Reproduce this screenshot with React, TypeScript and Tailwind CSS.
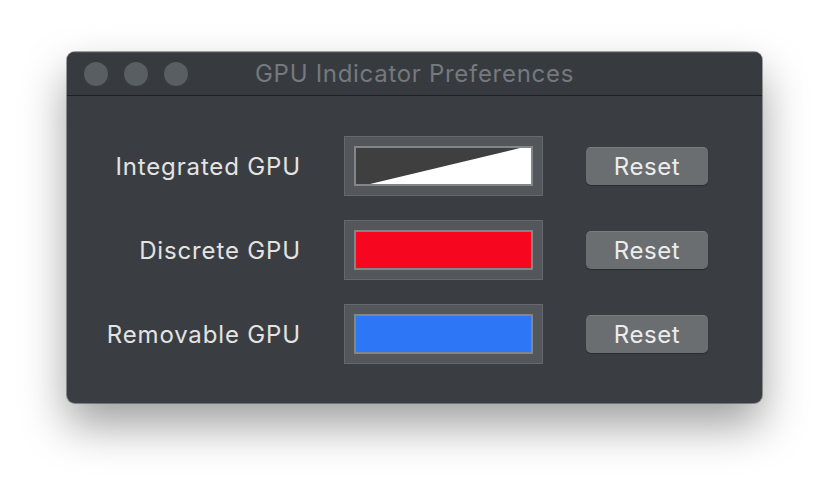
import React from "react";

type Row = { label: string; kind: "split" | "solid"; color?: string };

const rows: Row[] = [
  { label: "Integrated GPU", kind: "split" },
  { label: "Discrete GPU", kind: "solid", color: "#f7061f" },
  { label: "Removable GPU", kind: "solid", color: "#2d77f6" },
];

function Swatch({ row }: { row: Row }) {
  return (
    <div className="w-[199px] h-[60px] border border-[#65696d] bg-[#53575b] p-[9px]">
      <div className="w-full h-full border-2 border-[#848586] bg-[#3f3f3f]">
        {row.kind === "split" ? (
          <svg
            width="100%"
            height="100%"
            viewBox="0 0 175 36"
            preserveAspectRatio="none"
            className="block"
          >
            <rect width="175" height="36" fill="#3f3f3f" />
            <polygon points="14,36 164,0 175,0 175,36" fill="#ffffff" />
          </svg>
        ) : (
          <div className="w-full h-full" style={{ background: row.color }} />
        )}
      </div>
    </div>
  );
}

export default function App() {
  return (
    <div
      className="w-[830px] h-[488px] bg-white pl-[67px] pt-[52px]"
      style={{ fontFamily: "Inter, 'Noto Sans', sans-serif" }}
    >
      <div className="w-[695px] h-[351px] rounded-[8px] bg-[#3a3e42] overflow-hidden flex flex-col shadow-[0_0_0_1px_rgba(0,0,0,0.35),0_22px_45px_rgba(0,0,0,0.38)]">
        {/* title bar */}
        <div className="relative h-[44px] shrink-0 bg-[#373b3f] border-b border-[#1e2023] flex items-center justify-center border-t border-t-[#4a4e52]">
          <div className="absolute left-[17px] top-[9px] flex gap-[16px]">
            <span className="w-[24px] h-[24px] rounded-full bg-[#595e62]" />
            <span className="w-[24px] h-[24px] rounded-full bg-[#595e62]" />
            <span className="w-[24px] h-[24px] rounded-full bg-[#595e62]" />
          </div>
          <span className="text-[24px] text-[#75797d] tracking-[0.7px]">
            GPU Indicator Preferences
          </span>
        </div>

        {/* body */}
        <div className="flex-1 flex flex-col gap-[24px] pt-[40px]">
          {rows.map((row) => (
            <div key={row.label} className="flex items-center h-[60px]">
              <div className="w-[234px] pt-[2px] text-right text-[24px] text-[#e3e3e3] tracking-[0.85px]">
                {row.label}
              </div>
              <div className="ml-[43px]">
                <Swatch row={row} />
              </div>
              <button className="ml-[43px] w-[122px] h-[38px] rounded-[5px] bg-[#6b6e71] border-t border-t-[#7a7d80] text-[24px] text-[#ececec] leading-none tracking-[0.6px] shadow-[0_1px_1px_rgba(0,0,0,0.3)]">
                Reset
              </button>
            </div>
          ))}
        </div>
      </div>
    </div>
  );
}
